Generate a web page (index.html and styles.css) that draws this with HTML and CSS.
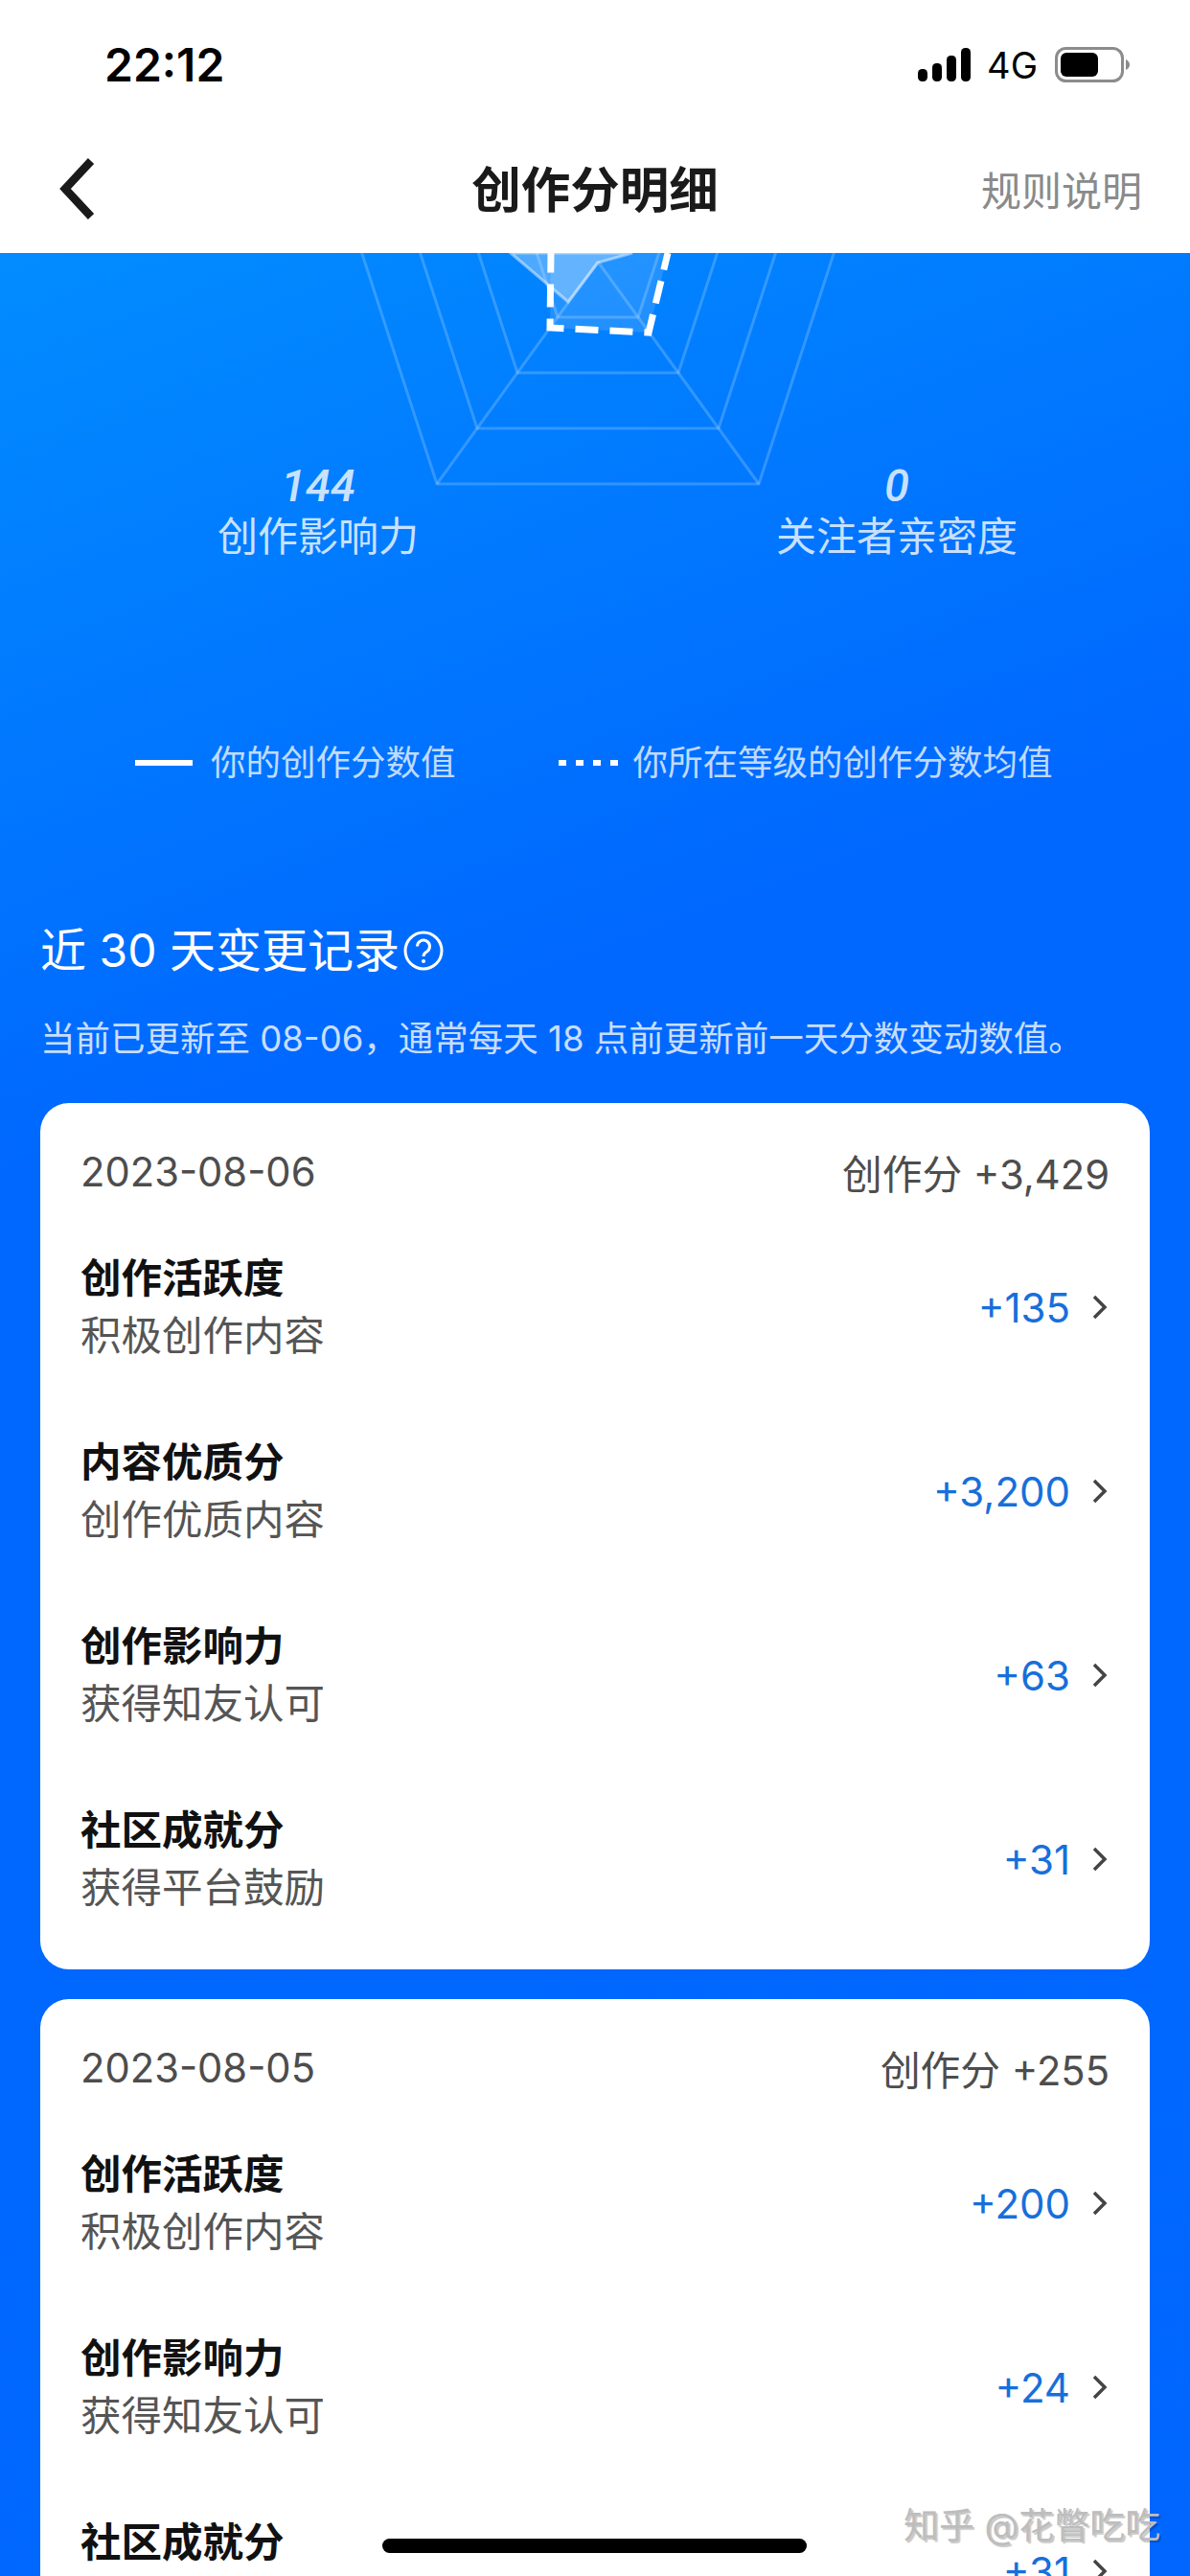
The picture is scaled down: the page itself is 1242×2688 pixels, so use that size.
FILE: index.html
```html
<!DOCTYPE html>
<html lang="zh-CN">
<head>
    <meta charset="UTF-8">
    <meta name="viewport" content="width=device-width, initial-scale=1.0">
    <title>创作分明细</title>
    <link rel="stylesheet" href="styles.css">
</head>
<body>

<div class="page">
    <!-- Status bar -->
    <div class="status-bar">
        <span class="time">22:12</span>
        <div class="status-icons">
            <svg class="signal" width="55" height="35" viewBox="0 0 55 35">
                <rect x="0" y="22" width="10" height="13" rx="4.5"/>
                <rect x="15" y="16" width="10" height="19" rx="4.5"/>
                <rect x="30" y="8" width="10" height="27" rx="4.5"/>
                <rect x="45" y="0" width="10" height="35" rx="4.5"/>
            </svg>
            <span class="network">4G</span>
            <svg class="battery" width="79" height="37" viewBox="0 0 79 37">
                <rect x="1.5" y="1.5" width="69" height="34" rx="10" fill="none" stroke="#8c8c8c" stroke-width="3"/>
                <rect x="6" y="6" width="39" height="25" rx="6"/>
                <path d="M74 13 Q78 15 78 18.5 Q78 22 74 24 Z" fill="#8c8c8c"/>
            </svg>
        </div>
    </div>

    <!-- Nav -->
    <div class="nav">
        <svg class="back" width="40" height="64" viewBox="0 0 40 64">
            <path d="M34 3 L7 32 L34 61" fill="none" stroke="#1a1a1a" stroke-width="8.5"/>
        </svg>
        <h1>创作分明细</h1>
        <span class="rules">规则说明</span>
    </div>

    <div class="main">
        <div class="radar">
            <svg width="1242" height="250" viewBox="0 264 1242 250">
                <g fill="none" stroke="#fff" stroke-opacity="0.2" stroke-width="3">
                    <path d="M352 185 L456 505 H792 L896 185"/>
                    <path d="M420 207 L498 447 H750 L828 207"/>
                    <path d="M488 229 L540 389 H708 L760 229"/>
                    <path d="M556 251 L582 331 H666 L692 251"/>
                    <path d="M624 273 L456 505 M624 273 L792 505"/>
                </g>
                <path d="M575 264 L574 342 L677 347 L697 264 Z" fill="#fff" fill-opacity="0.13"/>
                <path d="M533 264 L593 315 L624 274 L660 264 Z" fill="#fff" fill-opacity="0.3" stroke="#fff" stroke-opacity="0.45" stroke-width="3"/>
                <path d="M697 264 L677 347 L574 342 L575 264" fill="none" stroke="#fff" stroke-width="7" stroke-dasharray="24 12" stroke-dashoffset="6"/>
            </svg>
        </div>

        <div class="stats">
            <div class="stat">
                <b>144</b>
                <span>创作影响力</span>
            </div>
            <div class="stat">
                <b>0</b>
                <span>关注者亲密度</span>
            </div>
        </div>

        <div class="legend">
            <div class="legend-item legend-mine">
                <i class="line-solid"></i>
                <span>你的创作分数值</span>
            </div>
            <div class="legend-item legend-avg">
                <i class="line-dots"></i>
                <span>你所在等级的创作分数均值</span>
            </div>
        </div>

        <h2 class="records-title">
            <span>近 30 天变更记录</span>
            <svg width="42" height="42" viewBox="0 0 42 42">
                <circle cx="21" cy="21" r="19" fill="none" stroke="#fff" stroke-width="3"/>
                <path d="M14.5 16.5 A6.5 6.5 0 1 1 24.5 22 Q21 24 21 27" fill="none" stroke="#fff" stroke-width="3"/>
                <circle cx="21" cy="32" r="2" fill="#fff"/>
            </svg>
        </h2>
        <p class="records-note">当前已更新至 08-06，通常每天 18 点前更新前一天分数变动数值。</p>

        <div class="card">
            <div class="card-head">
                <span>2023-08-06</span>
                <span>创作分 +3,429</span>
            </div>
            <div class="row">
                <div class="row-text">
                    <strong>创作活跃度</strong>
                    <span>积极创作内容</span>
                </div>
                <span class="value">+135</span>
                <svg class="arrow" width="17" height="26" viewBox="0 0 17 26"><path d="M3 2 L14 13 L3 24" fill="none" stroke="#444" stroke-width="3.5"/></svg>
            </div>
            <div class="row">
                <div class="row-text">
                    <strong>内容优质分</strong>
                    <span>创作优质内容</span>
                </div>
                <span class="value">+3,200</span>
                <svg class="arrow" width="17" height="26" viewBox="0 0 17 26"><path d="M3 2 L14 13 L3 24" fill="none" stroke="#444" stroke-width="3.5"/></svg>
            </div>
            <div class="row">
                <div class="row-text">
                    <strong>创作影响力</strong>
                    <span>获得知友认可</span>
                </div>
                <span class="value">+63</span>
                <svg class="arrow" width="17" height="26" viewBox="0 0 17 26"><path d="M3 2 L14 13 L3 24" fill="none" stroke="#444" stroke-width="3.5"/></svg>
            </div>
            <div class="row">
                <div class="row-text">
                    <strong>社区成就分</strong>
                    <span>获得平台鼓励</span>
                </div>
                <span class="value">+31</span>
                <svg class="arrow" width="17" height="26" viewBox="0 0 17 26"><path d="M3 2 L14 13 L3 24" fill="none" stroke="#444" stroke-width="3.5"/></svg>
            </div>
        </div>

        <div class="card">
            <div class="card-head">
                <span>2023-08-05</span>
                <span>创作分 +255</span>
            </div>
            <div class="row">
                <div class="row-text">
                    <strong>创作活跃度</strong>
                    <span>积极创作内容</span>
                </div>
                <span class="value">+200</span>
                <svg class="arrow" width="17" height="26" viewBox="0 0 17 26"><path d="M3 2 L14 13 L3 24" fill="none" stroke="#444" stroke-width="3.5"/></svg>
            </div>
            <div class="row">
                <div class="row-text">
                    <strong>创作影响力</strong>
                    <span>获得知友认可</span>
                </div>
                <span class="value">+24</span>
                <svg class="arrow" width="17" height="26" viewBox="0 0 17 26"><path d="M3 2 L14 13 L3 24" fill="none" stroke="#444" stroke-width="3.5"/></svg>
            </div>
            <div class="row">
                <div class="row-text">
                    <strong>社区成就分</strong>
                    <span>获得平台鼓励</span>
                </div>
                <span class="value">+31</span>
                <svg class="arrow" width="17" height="26" viewBox="0 0 17 26"><path d="M3 2 L14 13 L3 24" fill="none" stroke="#444" stroke-width="3.5"/></svg>
            </div>
        </div>
    </div>

    <div class="watermark">知乎 @花瞥吃吃</div>
    <div class="home-indicator"></div>
</div>

</body>
</html>
```

FILE: styles.css
```css
body {
    margin: 0;
    background-color: #fff;
    font-family: Inter, "Noto Sans CJK SC", sans-serif;
}

.page {
    width: 1242px;
    height: 2688px;
    position: relative;
    overflow: hidden;
    display: flex;
    flex-direction: column;
}

.status-bar {
    height: 135px;
    flex-shrink: 0;
    display: flex;
    justify-content: space-between;
    align-items: center;
    padding: 0 62px 0 109px;
    box-sizing: border-box;
}

.time {
    font-size: 48px;
    font-weight: 600;
    color: #000;
}

.status-icons {
    display: flex;
    align-items: center;
    gap: 18px;
}

.signal {
    margin-right: -1px;
}

.network {
    font-size: 38px;
    color: #000;
}

.nav {
    height: 129px;
    flex-shrink: 0;
    display: flex;
    align-items: center;
    justify-content: space-between;
    padding: 0 50px 6px 61px;
    box-sizing: border-box;
    position: relative;
}

.nav h1 {
    position: absolute;
    left: 0;
    right: 0;
    top: 28px;
    margin: 0;
    text-align: center;
    font-size: 51.5px;
    line-height: 70px;
    font-weight: 700;
    color: #1a1a1a;
}

.rules {
    font-size: 42px;
    color: #8a8a8a;
}

.main {
    flex: 1;
    background: linear-gradient(160deg, #028cff 0%, #0068ff 32%, #0066ff 100%);
    padding: 0 42px;
}

.radar {
    height: 217px;
    margin: 0 -42px;
}

.radar svg {
    display: block;
    overflow: visible;
}

.stats {
    display: grid;
    grid-template-columns: 664px 544px;
    margin: 0 -42px;
    color: rgba(255, 255, 255, 0.8);
    text-align: center;
}

.stat b {
    display: block;
    font-family: Roboto, sans-serif;
    font-size: 47px;
    line-height: 52px;
    font-style: italic;
    font-weight: 500;
}

.stat span {
    display: block;
    font-size: 42px;
    line-height: 50px;
    margin-top: 2px;
}

.legend {
    display: flex;
    align-items: center;
    margin-top: 186px;
    padding-left: 99px;
    color: rgba(255, 255, 255, 0.75);
    font-size: 36.5px;
    line-height: 50px;
}

.legend-item {
    display: flex;
    align-items: center;
    gap: 19px;
}

.legend-mine {
    margin-right: 107px;
}

.legend-avg {
    gap: 16px;
}

.line-solid {
    width: 60px;
    height: 6px;
    background: #fff;
}

.line-dots {
    width: 62px;
    height: 6px;
    background: repeating-linear-gradient(90deg, #fff 0 8px, transparent 8px 18px);
}

.records-title {
    display: flex;
    align-items: center;
    gap: 4px;
    margin: 140px 0 0;
    font-size: 48px;
    line-height: 62px;
    font-weight: 400;
    color: #fff;
}

.records-note {
    margin: 36px 0 0;
    font-size: 36.5px;
    line-height: 50px;
    color: rgba(255, 255, 255, 0.8);
}

.card {
    background: #fff;
    border-radius: 30px;
    padding: 41px 42px 19px;
    margin-top: 31px;
}

.records-note + .card {
    margin-top: 42px;
}

.card-head {
    display: flex;
    justify-content: space-between;
    align-items: center;
    height: 62px;
    margin-bottom: 14px;
    font-size: 41.7px;
    color: #4d4d4d;
}

.row {
    height: 192px;
    display: flex;
    align-items: center;
}

.row-text {
    flex: 1;
    display: flex;
    flex-direction: column;
    gap: 2px;
    font-size: 42.5px;
    line-height: 58px;
    color: #555;
}

.row-text strong {
    font-weight: 700;
    color: #111;
}

.value {
    font-size: 42px;
    color: #176fdb;
    margin-right: 22px;
}

.arrow {
    margin-right: 2px;
}

.watermark {
    position: absolute;
    left: 943px;
    top: 2611px;
    font-size: 37px;
    line-height: 50px;
    white-space: nowrap;
    color: #bdbdbd;
    text-shadow: 2px 2px 1px rgba(0, 0, 0, 0.22);
}

.home-indicator {
    position: absolute;
    left: 399px;
    top: 2649px;
    width: 443px;
    height: 15px;
    border-radius: 8px;
    background: #000;
}
```
